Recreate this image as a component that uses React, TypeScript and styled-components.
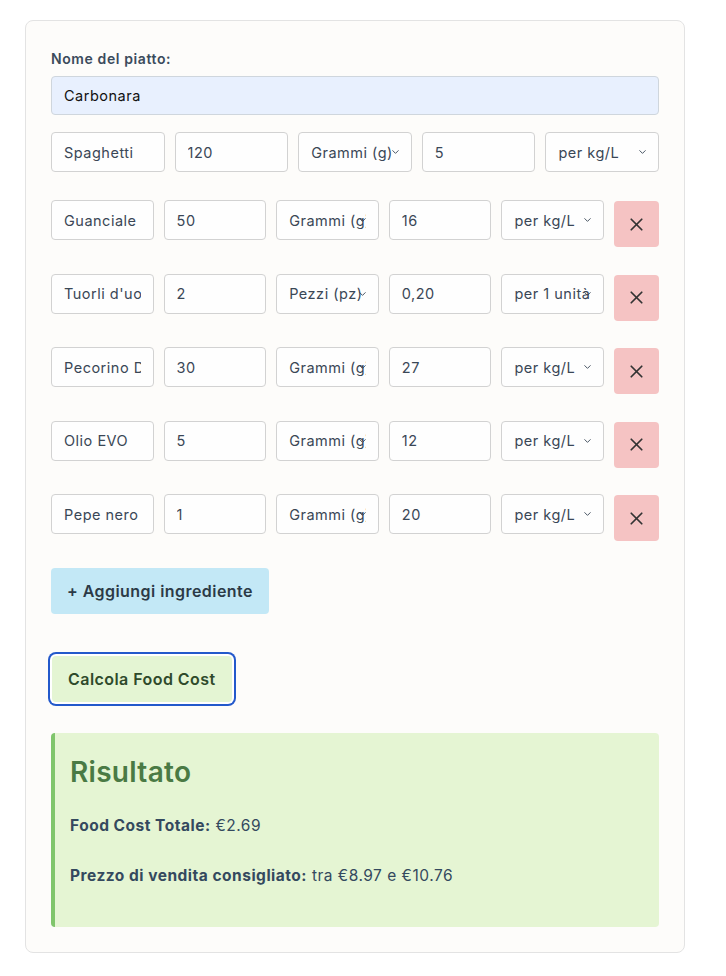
import React from "react";
import styled, { createGlobalStyle } from "styled-components";
import { X, ChevronDown } from "lucide-react";

const Global = createGlobalStyle`
  html, body { margin: 0; padding: 0; background: #ffffff; }
  body { font-family: "Inter", "Open Sans", sans-serif; color: #34495e; }
  * { box-sizing: border-box; }
`;

const Page = styled.div`
  padding: 20px 41px 24px 25px;
`;

const Card = styled.div`
  background: #fdfcfa;
  border: 1px solid #e3e3e3;
  border-radius: 8px;
  padding: 29px 25px 25px 25px;
`;

const Label = styled.label`
  display: block;
  font-size: 14px;
  font-weight: 600;
  letter-spacing: 0.6px;
  color: #3b4b5c;
  margin-bottom: 9px;
  line-height: 17px;
`;

const NameInput = styled.input`
  display: block;
  width: 100%;
  height: 39px;
  padding: 0 12px;
  border: 1px solid #cfd6dd;
  border-radius: 4px;
  background: #e8f0fe;
  font-family: inherit;
  font-size: 14.5px;
  letter-spacing: 0.5px;
  color: #111;
  margin-bottom: 17px;
  outline: none;
`;

const Row = styled.div<{ $withDelete: boolean }>`
  display: grid;
  grid-template-columns: ${(p) =>
    p.$withDelete ? "repeat(5, minmax(0, 1fr)) 45px" : "repeat(5, minmax(0, 1fr))"};
  align-items: start;
  column-gap: 10px;
  margin-bottom: ${(p) => (p.$withDelete ? "26.5px" : "28px")};
`;

const fieldCss = `
  width: 100%;
  min-width: 0;
  height: 40px;
  padding: 0 12px;
  border: 1px solid #d2d2d2;
  border-radius: 4px;
  background: #fefefe;
  font-family: inherit;
  font-size: 14.5px;
  letter-spacing: 0.5px;
  color: #3a4756;
  outline: none;
`;

const Field = styled.input`
  ${fieldCss}
`;

const SelectWrap = styled.div`
  position: relative;
  min-width: 0;
  height: 40px;
`;

const Select = styled.select`
  ${fieldCss}
  appearance: none;
`;

const Chevron = styled.span`
  position: absolute;
  right: 11px;
  top: 50%;
  transform: translateY(-50%);
  display: flex;
  color: #3a4756;
  pointer-events: none;
`;

const DeleteBtn = styled.button`
  width: 45px;
  height: 46px;
  margin-top: 1px;
  border: none;
  border-radius: 4px;
  background: #f5c3c3;
  color: #333;
  display: flex;
  align-items: center;
  justify-content: center;
  padding: 0;
`;

const AddBtn = styled.button`
  display: block;
  height: 46px;
  padding: 0 16px;
  border: none;
  border-radius: 4px;
  background: #c3e8f6;
  color: #2c3a47;
  font-family: inherit;
  font-size: 16px;
  letter-spacing: 0.45px;
  font-weight: 600;
  margin-bottom: 42px;
`;

const CalcBtn = styled.button`
  display: block;
  height: 46px;
  margin-left: 1px;
  padding: 0 16px;
  border: none;
  border-radius: 4px;
  background: #e4f5d3;
  color: #2f4a2b;
  font-family: inherit;
  font-size: 16px;
  letter-spacing: 0.45px;
  font-weight: 600;
  box-shadow: 0 0 0 2px #ffffff, 0 0 0 4px #2359cb;
  margin-bottom: 31px;
`;

const Result = styled.div`
  background: #e5f5d3;
  border-left: 4px solid #7fc56b;
  border-radius: 4px;
  padding: 20px 15px 13px 15px;
`;

const ResultTitle = styled.h2`
  margin: 0 0 23px 0;
  font-family: "Inter", sans-serif;
  font-size: 28px;
  letter-spacing: 0.3px;
  line-height: 38px;
  font-weight: 600;
  color: #4a7a44;
`;

const ResultLine = styled.p`
  margin: 0 0 26px 0;
  font-size: 15.5px;
  letter-spacing: 0.5px;
  line-height: 24px;
  color: #34495e;
  b { font-weight: 700; }
`;

type Ing = { name: string; qty: string; unit: string; price: string; per: string };

const units = ["Grammi (g)", "Pezzi (pz)"];
const pers = ["per kg/L", "per 1 unità"];

const ingredients: Ing[] = [
  { name: "Spaghetti", qty: "120", unit: "Grammi (g)", price: "5", per: "per kg/L" },
  { name: "Guanciale", qty: "50", unit: "Grammi (g)", price: "16", per: "per kg/L" },
  { name: "Tuorli d'uovo", qty: "2", unit: "Pezzi (pz)", price: "0,20", per: "per 1 unità" },
  { name: "Pecorino DOP", qty: "30", unit: "Grammi (g)", price: "27", per: "per kg/L" },
  { name: "Olio EVO", qty: "5", unit: "Grammi (g)", price: "12", per: "per kg/L" },
  { name: "Pepe nero", qty: "1", unit: "Grammi (g)", price: "20", per: "per kg/L" },
];

const Dropdown: React.FC<{ value: string; options: string[] }> = ({ value, options }) => (
  <SelectWrap>
    <Select defaultValue={value}>
      {options.map((o) => (
        <option key={o}>{o}</option>
      ))}
    </Select>
    <Chevron>
      <ChevronDown size={11} strokeWidth={2} />
    </Chevron>
  </SelectWrap>
);

export default function App() {
  return (
    <>
      <Global />
      <Page>
        <Card>
          <Label>Nome del piatto:</Label>
          <NameInput defaultValue="Carbonara" />
          {ingredients.map((ing, i) => (
            <Row key={i} $withDelete={i > 0}>
              <Field defaultValue={ing.name} />
              <Field defaultValue={ing.qty} />
              <Dropdown value={ing.unit} options={units} />
              <Field defaultValue={ing.price} />
              <Dropdown value={ing.per} options={pers} />
              {i > 0 && (
                <DeleteBtn>
                  <X size={21} strokeWidth={2} />
                </DeleteBtn>
              )}
            </Row>
          ))}
          <AddBtn>+ Aggiungi ingrediente</AddBtn>
          <CalcBtn>Calcola Food Cost</CalcBtn>
          <Result>
            <ResultTitle>Risultato</ResultTitle>
            <ResultLine>
              <b>Food Cost Totale:</b> €2.69
            </ResultLine>
            <ResultLine>
              <b>Prezzo di vendita consigliato:</b> tra €8.97 e €10.76
            </ResultLine>
          </Result>
        </Card>
      </Page>
    </>
  );
}
